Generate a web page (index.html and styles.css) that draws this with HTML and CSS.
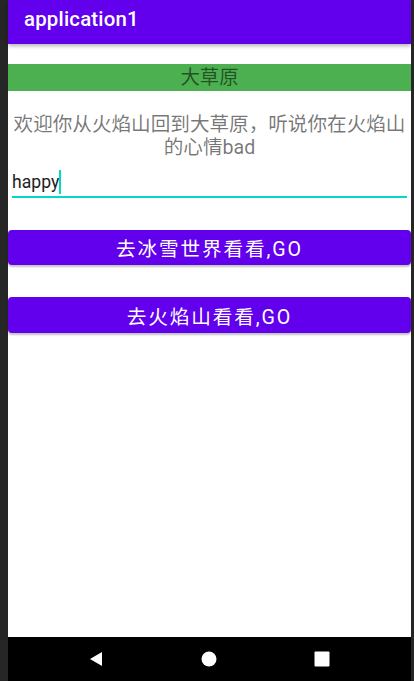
FILE: index.html
```html
<!DOCTYPE html>
<html>
<head>
<meta charset="utf-8">
<link rel="stylesheet" href="styles.css">
</head>
<body>
<div class="device">
  <header class="appbar"><span class="title">application1</span></header>
  <main class="content">
    <div class="banner">大草原</div>
    <p class="message">欢迎你从火焰山回到大草原，听说你在火焰山的心情bad</p>
    <div class="field"><span class="field-text">happy</span><span class="caret"></span></div>
    <button class="btn btn-first">去冰雪世界看看,GO</button>
    <button class="btn btn-second">去火焰山看看,GO</button>
  </main>
  <nav class="navbar">
    <span class="nav-item"><svg width="16" height="16" viewBox="0 0 16 16"><path d="M14 1 L14 15 L2 8 Z" fill="#fff"/></svg></span>
    <span class="nav-item"><svg width="16" height="16" viewBox="0 0 16 16"><circle cx="8" cy="8" r="7.5" fill="#fff"/></svg></span>
    <span class="nav-item"><svg width="16" height="16" viewBox="0 0 16 16"><rect x="0.5" y="0.5" width="15" height="15" rx="1" fill="#fff"/></svg></span>
  </nav>
</div>
</body>
</html>
```
FILE: styles.css
```css
html, body {
  margin: 0;
  padding: 0;
}
body {
  background: #262626;
  width: 414px;
  height: 681px;
  overflow: hidden;
  font-family: Roboto, "Noto Sans CJK SC", sans-serif;
}
.device {
  margin-left: 8px;
  width: 403px;
  height: 681px;
  background: #fff;
  display: flex;
  flex-direction: column;
}
.appbar {
  height: 44px;
  flex: none;
  background: #6200ee;
  box-shadow: 0 2px 4px rgba(0, 0, 0, 0.3);
  display: flex;
  align-items: center;
  padding-left: 16px;
  position: relative;
  z-index: 1;
}
.title {
  color: #fff;
  font-size: 20.4px;
  font-weight: 500;
  letter-spacing: 0.2px;
  margin-top: -7px;
}
.content {
  flex: 1;
  display: flex;
  flex-direction: column;
}
.banner {
  margin-top: 20px;
  height: 27px;
  background: #4caf50;
  color: rgba(0, 0, 0, 0.54);
  font-size: 19.4px;
  line-height: 27px;
  text-align: center;
}
.message {
  margin: 22px 4px 0;
  color: rgba(0, 0, 0, 0.54);
  font-size: 19.6px;
  line-height: 23px;
  text-align: center;
}
.field {
  margin: 8px 4px 0;
  height: 29px;
  border-bottom: 2px solid #03dac5;
  display: flex;
  align-items: center;
}
.field-text {
  color: #212121;
  font-size: 17.6px;
}
.caret {
  width: 2px;
  height: 24px;
  background: #03dac5;
}
.btn {
  display: block;
  width: 403px;
  height: 35px;
  margin: 0;
  padding: 0;
  border: none;
  border-radius: 4px;
  background: #6200ee;
  color: #fff;
  font-family: Roboto, "Noto Sans CJK SC", sans-serif;
  font-size: 19.6px;
  letter-spacing: 1.9px;
  box-shadow: 0 2px 2px rgba(0, 0, 0, 0.24);
}
.btn-first {
  margin-top: 32px;
}
.btn-second {
  margin-top: 32px;
  height: 36px;
}
.navbar {
  height: 44px;
  flex: none;
  background: #000;
  display: flex;
  align-items: center;
  padding-left: 73px;
  gap: 83px;
}
.nav-item {
  width: 30px;
  height: 30px;
  display: flex;
  align-items: center;
  justify-content: center;
}
```
